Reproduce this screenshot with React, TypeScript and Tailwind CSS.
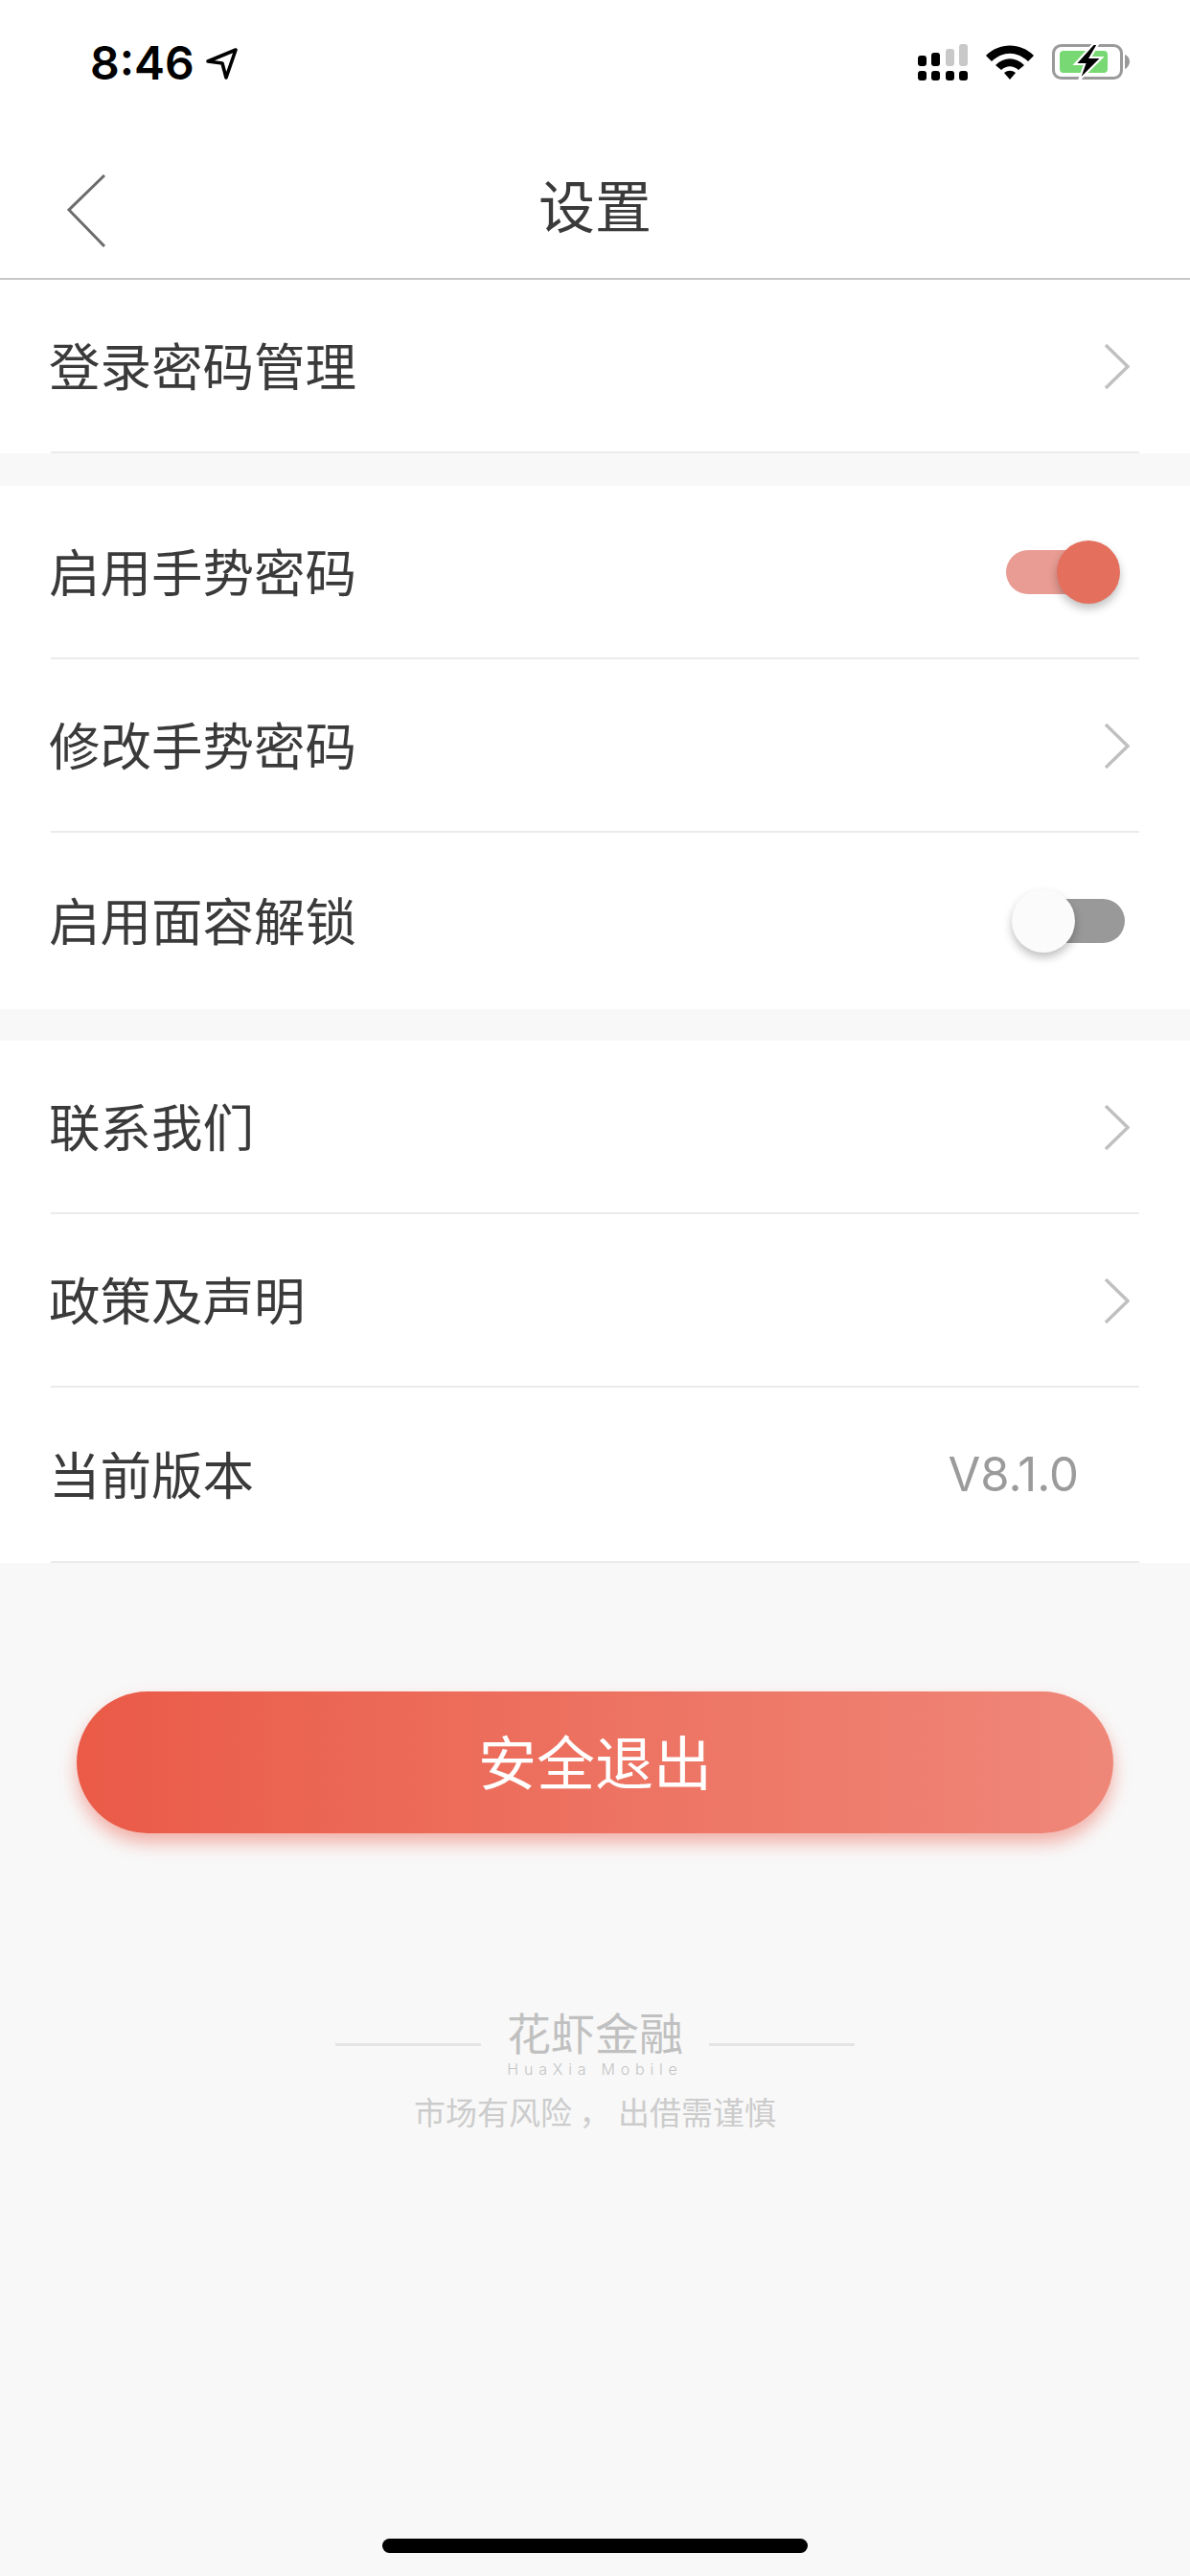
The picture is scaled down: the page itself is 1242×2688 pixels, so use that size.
import type { ReactNode } from "react";

const cjk = "font-['Noto_Sans_CJK_SC','Noto_Sans',sans-serif]";

function StatusBar() {
  return (
    <div className="flex h-[96px] items-start justify-between pl-[94px] pr-[63px] pt-[40px]">
      <div className="flex h-[52px] items-center gap-[12px]">
        <span className="font-['Inter',sans-serif] text-[48px] leading-[52px] font-semibold text-black">8:46</span>
        <svg viewBox="0 0 33 33" className="h-[33px] w-[33px]">
          <path d="M2 14 L31 2 L21 31 L17 16 Z" fill="none" stroke="#000" strokeWidth="3.6" strokeLinejoin="round" />
        </svg>
      </div>
      <div className="flex h-[50px] items-center gap-[19px]">
        {/* signal: two rows of dots, upper row grows and fades */}
        <svg viewBox="0 0 52 38" className="h-[38px] w-[52px]">
          <rect x="0" y="12" width="9" height="11" rx="3" fill="#000" />
          <rect x="14" y="9" width="9" height="14" rx="3" fill="#000" />
          <rect x="29" y="5" width="9" height="18" rx="3" fill="#c8c8c8" />
          <rect x="43" y="0" width="9" height="23" rx="3" fill="#c8c8c8" />
          <rect x="0" y="28" width="9" height="10" rx="3" fill="#000" />
          <rect x="14" y="28" width="9" height="10" rx="3" fill="#000" />
          <rect x="29" y="28" width="9" height="10" rx="3" fill="#000" />
          <rect x="43" y="28" width="9" height="10" rx="3" fill="#000" />
        </svg>
        <svg viewBox="0 0 50 36" className="h-[36px] w-[50px]">
          <path d="M0 11 C14 -3 36 -3 50 11 L44 17 C32 6 18 6 6 17 Z" fill="#000" />
          <path d="M10 21 C19 12 31 12 40 21 L34 26 C28 21 22 21 16 26 Z" fill="#000" />
          <path d="M19 29 C23 26 27 26 31 29 L25 36 Z" fill="#000" />
        </svg>
        <svg viewBox="0 0 81 38" className="h-[38px] w-[81px]">
          <rect x="1.5" y="1.5" width="71" height="34" rx="8" fill="none" stroke="#9a9a9a" strokeWidth="3" />
          <rect x="8" y="7" width="50" height="23" rx="4" fill="#78d974" />
          <path d="M76 11 C79 12 81 15 81 18 C81 21 79 25 76 26 Z" fill="#9a9a9a" />
          <path d="M43 0 L24 21 L34 21 L28 38 L52 14 L40 14 L48 0 Z" fill="#000" stroke="#fff" strokeWidth="2.2" />
        </svg>
      </div>
    </div>
  );
}

function NavBar() {
  return (
    <div className="relative flex h-[196px] items-center justify-center border-b-2 border-[#c8c8c8]">
      <svg viewBox="0 0 40 76" className="absolute left-[70px] top-[86px] h-[76px] w-[40px]" fill="none">
        <path d="M39 1 L2 37 L39 75" stroke="#6b6b6b" strokeWidth="3" />
      </svg>
      <span className={`${cjk} pt-[40px] text-[59px] leading-[80px] text-[#3a3a3a]`}>设置</span>
    </div>
  );
}

function Toggle({ on }: { on: boolean }) {
  if (on) {
    return (
      <div className="relative mr-[29px] h-[46px] w-[110px] rounded-full bg-[#e99c93]">
        <div className="absolute right-[-9px] top-[-10px] h-[66px] w-[66px] rounded-full bg-[#e46f5d] shadow-[0_5px_10px_rgba(0,0,0,0.25)]" />
      </div>
    );
  }
  return (
    <div className="relative mr-[15px] h-[46px] w-[110px] rounded-full bg-[#999999]">
      <div className="absolute left-[-8px] top-[-10px] h-[66px] w-[66px] rounded-full bg-[#fbfbfb] shadow-[0_5px_10px_rgba(0,0,0,0.25)]" />
    </div>
  );
}

function Row({ label, children, className }: { label: string; children?: ReactNode; className: string }) {
  return (
    <div className={`mx-[53px] flex items-center justify-between ${className}`}>
      <span className={`${cjk} mb-[4px] ml-[-2px] text-[53.5px] leading-[70px] text-[#3a3a3a]`}>{label}</span>
      {children}
    </div>
  );
}

function Arrow() {
  return (
    <svg viewBox="0 0 26 47" className="mr-[10px] mt-[2px] h-[47px] w-[26px]" fill="none">
      <path d="M1 1 L24 23.5 L1 46" stroke="#c0c0c0" strokeWidth="3.4" />
    </svg>
  );
}

const lined = "h-[181px] border-b-2 border-[#ebebeb]";

export default function App() {
  return (
    <div className="relative flex h-[2688px] w-[1242px] flex-col overflow-hidden bg-[#f8f8f8]">
      <div className="bg-white">
        <StatusBar />
        <NavBar />
      </div>

      <section className="bg-white">
        <Row label="登录密码管理" className={lined}>
          <Arrow />
        </Row>
      </section>

      <section className="mt-[34px] bg-white">
        <Row label="启用手势密码" className={lined}>
          <Toggle on />
        </Row>
        <Row label="修改手势密码" className={lined}>
          <Arrow />
        </Row>
        <Row label="启用面容解锁" className="h-[184px]">
          <Toggle on={false} />
        </Row>
      </section>

      <section className="mt-[33px] bg-white">
        <Row label="联系我们" className={lined}>
          <Arrow />
        </Row>
        <Row label="政策及声明" className={lined}>
          <Arrow />
        </Row>
        <Row label="当前版本" className="h-[183px] border-b-2 border-[#ebebeb]">
          <span className="mr-[63px] font-['Inter',sans-serif] text-[49px] leading-[60px] text-[#9b9b9b]">V8.1.0</span>
        </Row>
      </section>

      <div className="mx-[80px] mt-[134px] flex h-[148px] items-center justify-center rounded-full bg-gradient-to-r from-[#ea5a47] to-[#ef8779] shadow-[0_10px_18px_rgba(236,92,73,0.45)]">
        <span className={`${cjk} mb-[5px] text-[61px] leading-[80px] text-white`}>安全退出</span>
      </div>

      <div className="mt-[180px] flex flex-col items-center">
        <div className="flex items-center">
          <div className="mt-[4px] h-[3px] w-[152px] bg-[#e4e4e4]" />
          <div className="mx-[26px] flex w-[186px] flex-col items-center">
            <span className={`${cjk} text-[46px] leading-[52px] text-[#c0c0c0]`}>花虾金融</span>
            <span className="mt-[4px] font-['Inter',sans-serif] text-[16px] leading-[20px] font-light tracking-[5.8px] text-[#c4c4c4]">
              HuaXia Mobile
            </span>
          </div>
          <div className="mt-[4px] h-[3px] w-[152px] bg-[#e4e4e4]" />
        </div>
        <span className={`${cjk} mt-[12px] whitespace-pre text-[33px] leading-[44px] text-[#cccccc]`}>
          市场有风险 ， 出借需谨慎
        </span>
      </div>

      <div className="absolute bottom-[24px] left-[399px] h-[15px] w-[444px] rounded-full bg-black" />
    </div>
  );
}
